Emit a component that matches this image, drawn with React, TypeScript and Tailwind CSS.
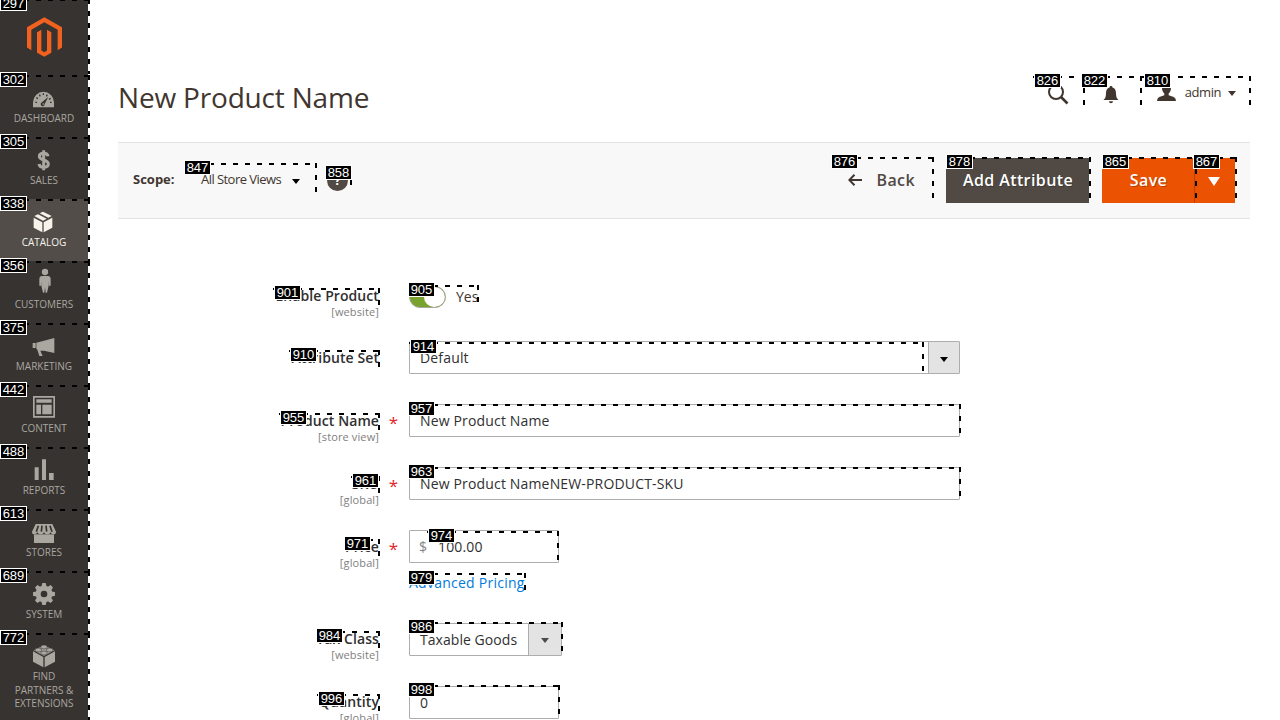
import React from "react";

type MarkProps = { id: number; x: number; y: number; w: number; h: number; lx?: number };

const DASH_X = "repeating-linear-gradient(to right, #000 0 5px, transparent 5px 12px)";
const DASH_Y = "repeating-linear-gradient(to bottom, #000 0 5px, transparent 5px 12px)";

const MARKS: MarkProps[] = [
  { id: 297, x: 0, y: -1, w: 90, h: 75 },
  { id: 302, x: 0, y: 75, w: 90, h: 62 },
  { id: 305, x: 0, y: 137, w: 90, h: 62 },
  { id: 338, x: 0, y: 199, w: 90, h: 62 },
  { id: 356, x: 0, y: 261, w: 90, h: 62 },
  { id: 375, x: 0, y: 323, w: 90, h: 62 },
  { id: 442, x: 0, y: 385, w: 90, h: 62 },
  { id: 488, x: 0, y: 447, w: 90, h: 62 },
  { id: 613, x: 0, y: 509, w: 90, h: 62 },
  { id: 689, x: 0, y: 571, w: 90, h: 62 },
  { id: 772, x: 0, y: 633, w: 90, h: 87 },
  { id: 826, x: 1033, y: 76, w: 52, h: 30, lx: 1034 },
  { id: 822, x: 1081, y: 76, w: 61, h: 30, lx: 1081 },
  { id: 810, x: 1142, y: 76, w: 109, h: 30, lx: 1144 },
  { id: 847, x: 185, y: 163, w: 132, h: 30, lx: 184 },
  { id: 858, x: 326, y: 168, w: 26, h: 18, lx: 325 },
  { id: 876, x: 832, y: 157, w: 102, h: 43, lx: 831 },
  { id: 878, x: 946, y: 157, w: 145, h: 43, lx: 946 },
  { id: 865, x: 1103, y: 157, w: 94, h: 43 },
  { id: 867, x: 1194, y: 157, w: 43, h: 43 },
  { id: 901, x: 273, y: 288, w: 107, h: 17, lx: 274 },
  { id: 905, x: 409, y: 285, w: 70, h: 17 },
  { id: 910, x: 289, y: 350, w: 91, h: 17, lx: 290 },
  { id: 914, x: 409, y: 342, w: 515, h: 30, lx: 410 },
  { id: 955, x: 279, y: 413, w: 101, h: 17, lx: 280 },
  { id: 957, x: 409, y: 404, w: 552, h: 32 },
  { id: 961, x: 351, y: 476, w: 29, h: 17, lx: 352 },
  { id: 963, x: 409, y: 467, w: 552, h: 32 },
  { id: 971, x: 344, y: 539, w: 36, h: 17, lx: 344 },
  { id: 974, x: 427, y: 531, w: 132, h: 32, lx: 428 },
  { id: 979, x: 409, y: 573, w: 117, h: 17 },
  { id: 984, x: 316, y: 631, w: 64, h: 17, lx: 316 },
  { id: 986, x: 409, y: 622, w: 154, h: 32 },
  { id: 996, x: 317, y: 694, w: 63, h: 17, lx: 318 },
  { id: 998, x: 409, y: 685, w: 151, h: 32 },
];

function Mark({ id, x, y, w, h, lx }: MarkProps) {
  return (
    <>
      <div className="absolute h-[2px]" style={{ left: x, top: y, width: w, backgroundImage: DASH_X }} />
      <div className="absolute w-[2px]" style={{ left: x + w - 2, top: y, height: h, backgroundImage: DASH_Y }} />
      <div
        className="absolute h-[15px] w-[27px] border border-white bg-black text-center font-['Liberation_Sans',sans-serif] text-[13px] leading-[13px] text-white"
        style={{ left: lx ?? Math.max(0, x - 1), top: y - 3 }}
      >
        {id}
      </div>
    </>
  );
}

const BG = "#373330";

const icons: Record<string, React.ReactNode> = {
  dashboard: (
    <>
      <path d="M15 97V82a31.500 31.500 0 0 1 63 0v15Z" />
      <g stroke={BG} strokeWidth="4" fill="none">
        <path d="M22 82h5M25 68l5 3M34 59l3 5M46 55v5M58 59l-3 5M68 70l-5 3M71 82h-5" />
      </g>
      <path d="M61 65 50 87a6 6 0 1 1-8-5Z" fill={BG} />
      <circle cx="46" cy="87" r="2.500" />
    </>
  ),
  sales: (
    <path
      d="M60 58C59 51 54 49 47 49c-8 0-13 3-13 9 0 7 6 9 13 11s14 4 14 12c0 7-6 10-14 10S34 88 33 81M47 40v60"
      fill="none"
      stroke="currentColor"
      strokeWidth="9"
    />
  ),
  catalog: (
    <>
      <path d="M17 56 43 70v30L17 86ZM73 56 47 70v30l26-14Z" />
      <path d="M19 51 30 46 56 59 45 65ZM35 43 45 38 71 51 61 56Z" />
    </>
  ),
  customers: (
    <>
      <circle cx="51" cy="33" r="9.500" />
      <path d="M41 45h20q7 1 7 8v21h-5V60l-1 14-5 21h-4l-2-16-2 16h-4l-5-21-1-14v14h-5V53q0-7 7-8Z" />
    </>
  ),
  marketing: (
    <path d="M14 60h9v15h-9ZM25 59l54-14v45L48 83H37l7 16H34L28 80l-3-3Z" />
  ),
  content: (
    <>
      <path d="M15 33h66v65H15Zm5 5v55h56V38Z" fillRule="evenodd" />
      <path d="M25 43h46v10H25ZM25 59h14v29H25ZM43 59h28v29H43Z" />
    </>
  ),
  reports: <path d="M20 61h12v38H20ZM42 37h12v62H42ZM63 78h14v21H63Z" />,
  stores: (
    <>
      <path d="M18 76h60v26H18Z" />
      <path d="M23 45h50l11 23q0 8-8 8-7 0-8-6-2 6-10 6-8 0-10-6-2 6-10 6-8 0-10-6-2 6-9 6-7 0-7-8Z" />
      <path d="M31 50 25 68M42 50l-2 18M54 50l2 18M66 50l6 18" stroke={BG} strokeWidth="5" />
    </>
  ),
  system: (
    <>
      {[0, 45, 90, 135].map((a) => (
        <path key={a} d="M43 36h10l3 12v42l-3 12H43l-3-12V48Z" transform={`rotate(${a} 48 69)`} />
      ))}
      <circle cx="48" cy="69" r="25" />
      <circle cx="48" cy="69" r="10" fill={BG} />
    </>
  ),
  partners: (
    <>
      <path d="M15 55 46 72v31L15 86ZM81 55 50 72v31l31-17Z" />
      <path d="M17 52 48 37l31 15-31 17Z" />
      <g stroke={BG} strokeWidth="1.800">
        <path d="M39 40v4a9 4 0 0 0 18 0v-4a9 4 0 0 0-18 0ZM22 49v4a9 4 0 0 0 18 0v-4a9 4 0 0 0-18 0ZM56 49v4a9 4 0 0 0 18 0v-4a9 4 0 0 0-18 0ZM39 58v4a9 4 0 0 0 18 0v-4a9 4 0 0 0-18 0Z" />
      </g>
    </>
  ),
};

function NavItem({ icon, label, active }: { icon: string; label: string; active?: boolean }) {
  return (
    <li
      className={`flex min-h-[62px] shrink-0 flex-col items-center ${
        active ? "bg-[#524d49] text-[#f7f3eb]" : "text-[#aaa6a0]"
      }`}
    >
      <svg className="h-9 w-8" viewBox="0 0 96 108" fill="currentColor">
        {icons[icon]}
      </svg>
      <span className="mt-px w-[68px] text-center text-[10px] leading-[13.500px]">{label}</span>
    </li>
  );
}

function Caret({ className }: { className: string }) {
  return (
    <svg className={className} viewBox="0 0 10 6" preserveAspectRatio="none" fill="currentColor">
      <path d="M0 0h10L5 6Z" />
    </svg>
  );
}

type RowProps = { label: string; scope?: string; required?: boolean; className?: string; children: React.ReactNode };

function Row({ label, scope, required, className = "h-[63px]", children }: RowProps) {
  return (
    <div className={`flex items-start ${className}`}>
      <div className="flex w-[261px] flex-col items-end">
        <span className="text-[14px] leading-[33px] font-semibold tracking-[0.08px] text-[#303030]">{label}</span>
        {scope && (
          <span className="-mt-[7px] text-[11px] leading-[14px] tracking-[0.12px] text-[#808080]">[{scope}]</span>
        )}
      </div>
      <span className="w-[30px] pt-[2px] pr-px text-center text-[17px] leading-[33px] text-[#e22626]">
        {required ? "*" : ""}
      </span>
      {children}
    </div>
  );
}

const field =
  "flex h-[33px] items-center rounded-[1px] border border-[#adadad] bg-white text-[14px] tracking-[0.16px] text-[#303030]";

export default function App() {
  return (
    <div className="relative flex h-[720px] w-[1280px] overflow-hidden bg-white font-['Open_Sans',sans-serif]">
      <nav className="w-[88px] shrink-0 bg-[#373330]">
        <div className="flex h-[75px] justify-center pt-[17px] pl-px">
          <svg className="h-[40px] w-[35px]" viewBox="81 53 105 119" fill="#f1611f">
            <path d="M133 53 186 83v61l-13 8V91l-40-23-39 23v61l-13-8V83Z" />
            <path d="m111 98 13-7v62l9 5 8-5V91l13 7v62l-21 12-22-12Z" />
          </svg>
        </div>
        <ul className="flex flex-col">
          <NavItem icon="dashboard" label="DASHBOARD" />
          <NavItem icon="sales" label="SALES" />
          <NavItem icon="catalog" label="CATALOG" active />
          <NavItem icon="customers" label="CUSTOMERS" />
          <NavItem icon="marketing" label="MARKETING" />
          <NavItem icon="content" label="CONTENT" />
          <NavItem icon="reports" label="REPORTS" />
          <NavItem icon="stores" label="STORES" />
          <NavItem icon="system" label="SYSTEM" />
          <NavItem icon="partners" label="FIND PARTNERS & EXTENSIONS" />
        </ul>
      </nav>

      <main className="flex flex-1 flex-col pr-[30px] pl-[30px]">
        <header className="flex h-[142px] shrink-0 items-start justify-between pt-[75px] text-[#41362f]">
          <h1 className="text-[28px] leading-[44px] tracking-[-0.18px]">New Product Name</h1>
          <div className="flex h-8 items-center pt-[2px] pr-[14px]">
            <svg className="mt-[3px] mr-[34px] h-[22px] w-[22px]" viewBox="0 0 22 22" fill="none" stroke="currentColor">
              <circle cx="9" cy="9" r="7" strokeWidth="2" />
              <path d="m14 14 6.500 6.500" strokeWidth="2.600" />
            </svg>
            <svg className="mt-[5px] mr-[38px] h-[18px] w-[16px]" viewBox="0 0 16 18" fill="currentColor">
              <path d="M8 0c1 0 1.500.7 1.500 1.500C12 2.300 13 4.500 13 7c0 4 .8 5.500 2.500 7H.5C2.200 12.500 3 11 3 7c0-2.500 1-4.700 3.500-5.500C6.500.7 7 0 8 0ZM6 15.200h4a2 2 0 0 1-4 0Z" />
            </svg>
            <svg className="mr-[9px] h-[18px] w-[19px]" viewBox="0 0 19 18" fill="currentColor">
              <path d="M9.500 0C13 0 14 2.500 14 5s-1 4.500-2.300 5.500v1.700l5 1.800q2.300 1 2.300 4H0q0-3 2.300-4l5-1.800v-1.700C6 9.500 5 7.500 5 5s1-5 4.500-5Z" />
            </svg>
            <span className="text-[13px] leading-8 tracking-[-0.45px]">admin</span>
            <Caret className="mt-[2px] ml-[7px] h-[5px] w-2" />
          </div>
        </header>

        <section className="flex h-[77px] w-[1132px] shrink-0 items-center border-y border-[#e3e3e3] bg-[#f8f8f8] pr-[15px] pl-[15px] text-[#41362f]">
          <span className="w-[68px] pb-[2px] text-[13px] font-bold">Scope:</span>
          <span className="w-[91px] pb-[2px] text-[13px] tracking-[-0.55px]">All Store Views</span>
          <Caret className="mt-[2px] h-[5px] w-2 text-black" />
          <span className="ml-[27px] flex h-[21px] w-[21px] items-center justify-center rounded-full bg-[#514943] text-[13px] font-bold text-white">
            ?
          </span>
          <div className="ml-auto flex items-center text-[16px] font-semibold tracking-[0.4px]">
            <svg className="mr-[14px] mb-px h-[12px] w-[14px]" viewBox="0 0 14 12" fill="none" stroke="currentColor" strokeWidth="2">
              <path d="M14 6H1.500M6.500.8 1.300 6l5.200 5.200" />
            </svg>
            <span className="mr-[31px] pb-[2px] text-[#514943]">Back</span>
            <button className="mr-[13px] h-[45px] w-[143px] bg-[#514943] pb-[2px] pl-px text-white [text-shadow:1px_1px_0_rgba(0,0,0,.25)]">
              Add Attribute
            </button>
            <button className="h-[45px] w-[92px] bg-[#eb5202] pb-[2px] pl-px text-white [text-shadow:1px_1px_0_rgba(0,0,0,.25)]">
              Save
            </button>
            <button className="flex h-[45px] w-[41px] items-center justify-center border-l border-[#b84002] bg-[#eb5202] pr-[2px] text-white">
              <Caret className="mt-[2px] h-[9px] w-3" />
            </button>
          </div>
        </section>

        <form className="flex flex-col pt-[61px]">
          <Row label="Enable Product" scope="website" className="-mt-px h-[62px]">
            <div className="flex h-[33px] items-center gap-[10px] pt-[2px]">
              <span className="flex h-[22px] w-[37px] justify-end overflow-hidden rounded-full border border-[#aaa6a0] bg-[#79a22e]">
                <span className="h-5 w-[21px] rounded-full bg-white" />
              </span>
              <span className="text-[14px] text-[#41362f]">Yes</span>
            </div>
          </Row>
          <Row label="Attribute Set">
            <div className={`${field} w-[551px] justify-between pl-[10px]`}>
              Default
              <span className="flex h-full w-[31px] items-center justify-center border-l border-[#adadad] bg-[#e3e3e3] text-black">
                <Caret className="mt-[3px] h-[5px] w-2" />
              </span>
            </div>
          </Row>
          <Row label="Product Name" scope="store view" required>
            <div className={`${field} w-[551px] pl-[10px]`}>New Product Name</div>
          </Row>
          <Row label="SKU" scope="global" required>
            <div className={`${field} w-[551px] pl-[10px]`}>New Product NameNEW-PRODUCT-SKU</div>
          </Row>
          <Row label="Price" scope="global" required className="h-[92px]">
            <div className="flex flex-col items-start">
              <div className={`${field} w-[150px] pl-[9px]`}>
                <span className="w-[19px] text-[#858585]">$</span>100.00
              </div>
              <a className="mt-[10px] text-[14px] leading-5 tracking-[0.25px] text-[#007bdb]">Advanced Pricing</a>
            </div>
          </Row>
          <Row label="Tax Class" scope="website">
            <div className={`${field} mt-px w-[153px] justify-between pl-[10px]`}>
              <span className="tracking-[0.05px]">Taxable Goods</span>
              <span className="flex h-full w-[33px] items-center justify-center border-l border-[#adadad] bg-[#e3e3e3] text-[#514943]">
                <Caret className="mt-px h-[5px] w-2" />
              </span>
            </div>
          </Row>
          <Row label="Quantity" scope="global">
            <div className={`${field} mt-px w-[150px] pl-[10px]`}>0</div>
          </Row>
        </form>
      </main>

      {MARKS.map((m) => (
        <Mark key={m.id} {...m} />
      ))}
    </div>
  );
}
